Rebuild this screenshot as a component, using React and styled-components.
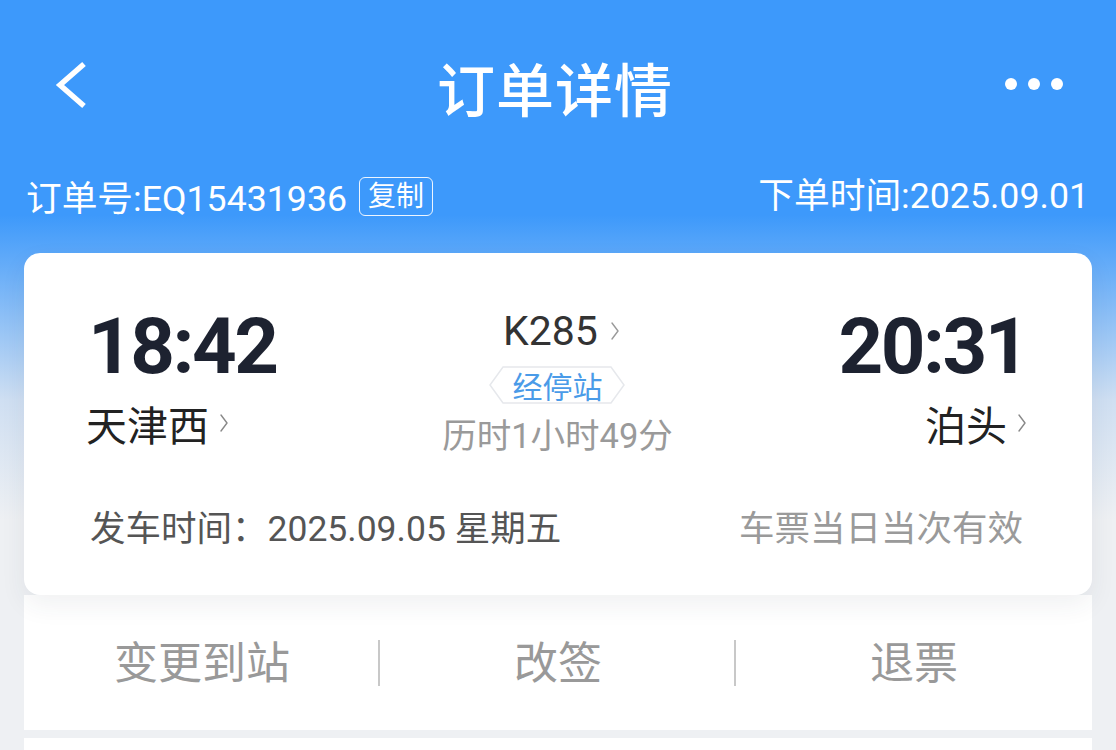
import styled, { createGlobalStyle } from 'styled-components'

const GlobalStyle = createGlobalStyle`
  html, body {
    margin: 0;
    padding: 0;
  }
  body {
    font-family: Roboto, "Noto Sans CJK SC", sans-serif;
    background: #eef0f3;
  }
`

const Page = styled.div`
  width: 1116px;
  height: 750px;
  overflow: hidden;
  background: linear-gradient(180deg, #3d99fb 0px, #3d99fb 215px, #cfdff2 400px, #eef0f3 520px, #eef0f3 750px);
`

const Header = styled.div`
  height: 84px;
  padding: 45px 52px 0 54px;
  display: flex;
  align-items: center;
  justify-content: space-between;
`

const IconButton = styled.div`
  width: 64px;
  height: 64px;
  display: flex;
  align-items: center;
  justify-content: ${({ $end }) => ($end ? 'flex-end' : 'flex-start')};
  margin-top: ${({ $shift }) => $shift || 0}px;
`

const Title = styled.h1`
  margin: 0 0 0 -8px;
  font-size: 58px;
  font-weight: 500;
  color: #fff;
  letter-spacing: 1px;
`

const OrderRow = styled.div`
  margin-top: 46px;
  padding: 0 27px 0 26px;
  height: 40px;
  display: flex;
  align-items: center;
  justify-content: space-between;
  color: #fff;
  font-size: 35.7px;
`

const OrderLeft = styled.div`
  display: flex;
  align-items: center;
  gap: 12px;
`

const CopyTag = styled.span`
  display: inline-flex;
  align-items: center;
  height: 39px;
  padding: 0 8px;
  box-sizing: border-box;
  border: 1px solid rgba(255, 255, 255, 0.9);
  border-radius: 6px;
  font-size: 28px;
  line-height: 1;
  margin-top: 3px;
`

const OrderTime = styled.div`
  margin-top: -6px;
`

const Card = styled.div`
  position: relative;
  z-index: 1;
  margin: 38px 24px 0;
  height: 342px;
  box-sizing: border-box;
  background: #fff;
  border-radius: 16px;
  box-shadow: 0 10px 26px rgba(40, 50, 70, 0.07);
  padding: 54px 0 0;
`

const Journey = styled.div`
  display: grid;
  grid-template-columns: 1fr auto 1fr;
  padding: 0 65px 0 64px;
`

const Stop = styled.div`
  display: flex;
  flex-direction: column;
  align-items: ${({ $right }) => ($right ? 'flex-end' : 'flex-start')};
  gap: 8px;
`

const Clock = styled.div`
  font-size: 78px;
  line-height: 80px;
  font-weight: 700;
  color: #1d2230;
  letter-spacing: -2.5px;
`

const Station = styled.div`
  display: flex;
  align-items: center;
  gap: 10px;
  height: 56px;
  font-size: 41px;
  color: #222;
  margin-left: ${({ $right }) => ($right ? '0' : '-2px')};
`

const Middle = styled.div`
  display: flex;
  flex-direction: column;
  align-items: center;
  padding-top: 1px;
`

const TrainNo = styled.div`
  display: flex;
  align-items: center;
  gap: 12px;
  height: 46px;
  font-size: 41px;
  color: #333;
  margin-left: 8px;
`

const StopsBadge = styled.div`
  position: relative;
  width: 136px;
  height: 38px;
  margin-top: 12px;
  display: flex;
  align-items: center;
  justify-content: center;
  font-size: 30px;
  color: #4a9be8;

  svg {
    position: absolute;
    inset: 0;
  }
  span {
    position: relative;
  }
`

const Duration = styled.div`
  margin-top: 9px;
  font-size: 34.5px;
  line-height: 46px;
  color: #9a9a9a;
`

const CardFooter = styled.div`
  margin-top: 41px;
  padding: 0 69px 0 66px;
  display: flex;
  justify-content: space-between;
  align-items: center;
  font-size: 35.5px;
`

const DepartText = styled.div`
  color: #555;
`

const ValidText = styled.div`
  color: #9a9a9a;
`

const Actions = styled.div`
  margin: 0 24px;
  height: 135px;
  background: #fff;
  display: grid;
  grid-template-columns: 1fr 1fr 1fr;
  align-items: center;
`

const Action = styled.div`
  position: relative;
  text-align: center;
  font-size: 44px;
  color: #999;
  margin-top: -5px;

  & + &::before {
    content: '';
    position: absolute;
    left: -2px;
    top: 50%;
    width: 2px;
    height: 46px;
    margin-top: -20px;
    background: #c8c8c8;
  }
`

const NextPanel = styled.div`
  margin: 8px 24px 0;
  height: 40px;
  background: #fff;
`

const Chevron = ({ size = 18, color = '#999' }) => (
  <svg width={size * 0.5} height={size} viewBox="0 0 10 20" fill="none">
    <path d="M2 2 L8 10 L2 18" stroke={color} strokeWidth="1.4" strokeLinecap="round" strokeLinejoin="round" />
  </svg>
)

const App = () => (
  <>
    <GlobalStyle />
    <Page>
      <Header>
        <IconButton $shift={-5}>
          <svg width="34" height="48" viewBox="0 0 34 48" fill="none">
            <path d="M30 3 L6 24 L30 45" stroke="#fff" strokeWidth="5.5" strokeLinejoin="miter" />
          </svg>
        </IconButton>
        <Title>订单详情</Title>
        <IconButton $end $shift={-6}>
          <svg width="60" height="14" viewBox="0 0 60 14">
            <circle cx="7" cy="7" r="6" fill="#fff" />
            <circle cx="30" cy="7" r="6" fill="#fff" />
            <circle cx="53" cy="7" r="6" fill="#fff" />
          </svg>
        </IconButton>
      </Header>

      <OrderRow>
        <OrderLeft>
          <span>订单号:EQ15431936</span>
          <CopyTag>复制</CopyTag>
        </OrderLeft>
        <OrderTime>下单时间:2025.09.01</OrderTime>
      </OrderRow>

      <Card>
        <Journey>
          <Stop>
            <Clock>18:42</Clock>
            <Station>
              天津西
              <Chevron size={20} color="#888" />
            </Station>
          </Stop>
          <Middle>
            <TrainNo>
              K285
              <Chevron size={20} color="#999" />
            </TrainNo>
            <StopsBadge>
              <svg width="136" height="38" viewBox="0 0 136 38" fill="none">
                <path d="M14 1 H122 L135 19 L122 37 H14 L1 19 Z" fill="#fff" stroke="#e6e8ec" strokeWidth="1.5" />
              </svg>
              <span>经停站</span>
            </StopsBadge>
            <Duration>历时1小时49分</Duration>
          </Middle>
          <Stop $right>
            <Clock>20:31</Clock>
            <Station $right>
              泊头
              <Chevron size={20} color="#888" />
            </Station>
          </Stop>
        </Journey>
        <CardFooter>
          <DepartText>发车时间：2025.09.05 星期五</DepartText>
          <ValidText>车票当日当次有效</ValidText>
        </CardFooter>
      </Card>

      <Actions>
        <Action>变更到站</Action>
        <Action>改签</Action>
        <Action>退票</Action>
      </Actions>

      <NextPanel />
    </Page>
  </>
)

export default App
